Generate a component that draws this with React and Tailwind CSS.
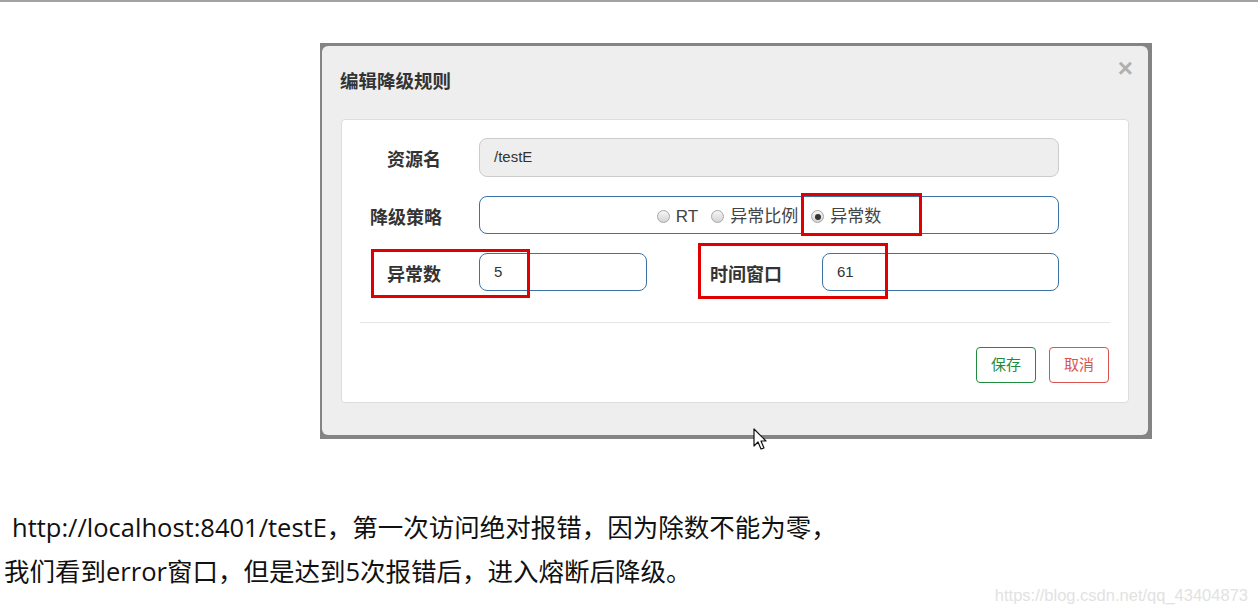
import React from "react";

const cjk = "font-['Liberation_Sans','Noto_Sans_CJK_SC',sans-serif]";

function Radio({ checked, label }) {
  return (
    <label className="flex items-center gap-[6px]">
      <span className="w-[13px] h-[13px] rounded-full border border-[#a6a6a6] bg-gradient-to-b from-[#f6f6f6] to-[#d4d4d4] flex items-center justify-center">
        {checked && <span className="w-[6px] h-[6px] rounded-full bg-[#333]" />}
      </span>
      <span className="text-[17px] text-[#444]">{label}</span>
    </label>
  );
}

function Input({ value, className = "", disabled }) {
  return (
    <div
      className={`h-[38px] rounded-[8px] border flex items-center pl-[14px] text-[15px] text-[#333] ${
        disabled ? "bg-[#eeeeee] border-[#cccccc]" : "bg-white border-[#3b73a8]"
      } ${className}`}
    >
      {value}
    </div>
  );
}

function Label({ children, className = "" }) {
  return (
    <div className={`mt-[6px] text-[18px] font-bold text-[#333] ${className}`}>{children}</div>
  );
}

export default function App() {
  return (
    <div className={`relative w-[1258px] h-[612px] overflow-hidden bg-white ${cjk}`}>
      <div className="h-[2px] bg-[#a3a3a3]" />

      {/* modal */}
      <div className="ml-[320px] mt-[41px] w-[832px] h-[396px] border-t-[3px] border-l-[2px] border-r-[4px] border-b-[4px] border-[#848484] bg-[#848484]">
        <div className="relative h-full bg-[#eeeeee] rounded-[6px] flex flex-col">
          <div className="h-[73px] pl-[18px] pt-[26px] leading-[20px] text-[18.5px] font-bold text-[#333]">
            编辑降级规则
          </div>
          <button className="absolute right-[15px] top-[9px] text-[#b0b0b0] text-[26px] leading-none font-bold">
            ×
          </button>

          <div className="mx-[19px] bg-white border border-[#dddddd] rounded-[4px] pt-[18px] pb-[19px]">
            <div className="flex items-center">
              <Label className="w-[100px] text-right pr-[1px]">资源名</Label>
              <Input value="/testE" disabled className="ml-[37px] w-[580px] h-[39px]" />
            </div>

            <div className="flex items-center mt-[19px]">
              <Label className="w-[100px] text-right">降级策略</Label>
              <div className="ml-[37px] w-[580px] h-[38px] rounded-[8px] border border-[#3b73a8] flex items-center justify-center gap-[13px] pt-[3px]">
                <Radio label="RT" />
                <Radio label="异常比例" />
                <Radio checked label="异常数" />
              </div>
            </div>

            <div className="flex items-center mt-[19px]">
              <Label className="w-[100px] text-right pr-[1px]">异常数</Label>
              <Input value="5" className="ml-[37px] w-[168px]" />
              <Label className="ml-[63px] w-[76px]">时间窗口</Label>
              <Input value="61" className="ml-[36px] w-[237px]" />
            </div>

            <div className="mx-[18px] mt-[31px] h-px bg-[#e5e5e5]" />

            <div className="flex justify-end gap-[13px] mt-[24px] mr-[19px]">
              <button className="w-[60px] h-[36px] rounded-[4px] border border-[#1e8c3c] text-[#1e8c3c] text-[15px]">
                保存
              </button>
              <button className="w-[60px] h-[36px] rounded-[4px] border border-[#d9534f] text-[#d9534f] text-[15px]">
                取消
              </button>
            </div>
          </div>
        </div>
      </div>

      {/* annotation boxes */}
      <div className="absolute left-[801px] top-[193px] w-[121px] h-[43px] border-[3px] border-[#e00000]" />
      <div className="absolute left-[371px] top-[249px] w-[159px] h-[49px] border-[3px] border-[#e00000]" />
      <div className="absolute left-[698px] top-[243px] w-[190px] h-[56px] border-[3px] border-[#e00000]" />

      {/* mouse cursor */}
      <svg className="absolute left-[753px] top-[428px]" width="16" height="24" viewBox="0 0 16 24">
        <path d="M1 1 L1 18 L5 14 L8 21 L11 20 L8 13 L13 13 Z" fill="white" stroke="#111" strokeWidth="1.2" strokeLinejoin="round" />
      </svg>

      {/* description */}
      <div className="absolute left-0 top-[505px] pl-[4px] text-[25.5px] leading-[44px] text-[#111] font-['Open_Sans','Noto_Sans_CJK_SC',sans-serif] whitespace-nowrap">
        <p className="pl-[8px]">http://localhost:8401/testE，第一次访问绝对报错，因为除数不能为零，</p>
        <p>我们看到error窗口，但是达到5次报错后，进入熔断后降级。</p>
      </div>

      <div className="absolute right-[10px] top-[583px] text-[16.5px] text-[#e2e2e2] font-['Liberation_Sans',sans-serif]">
        https://blog.csdn.net/qq_43404873
      </div>
    </div>
  );
}
